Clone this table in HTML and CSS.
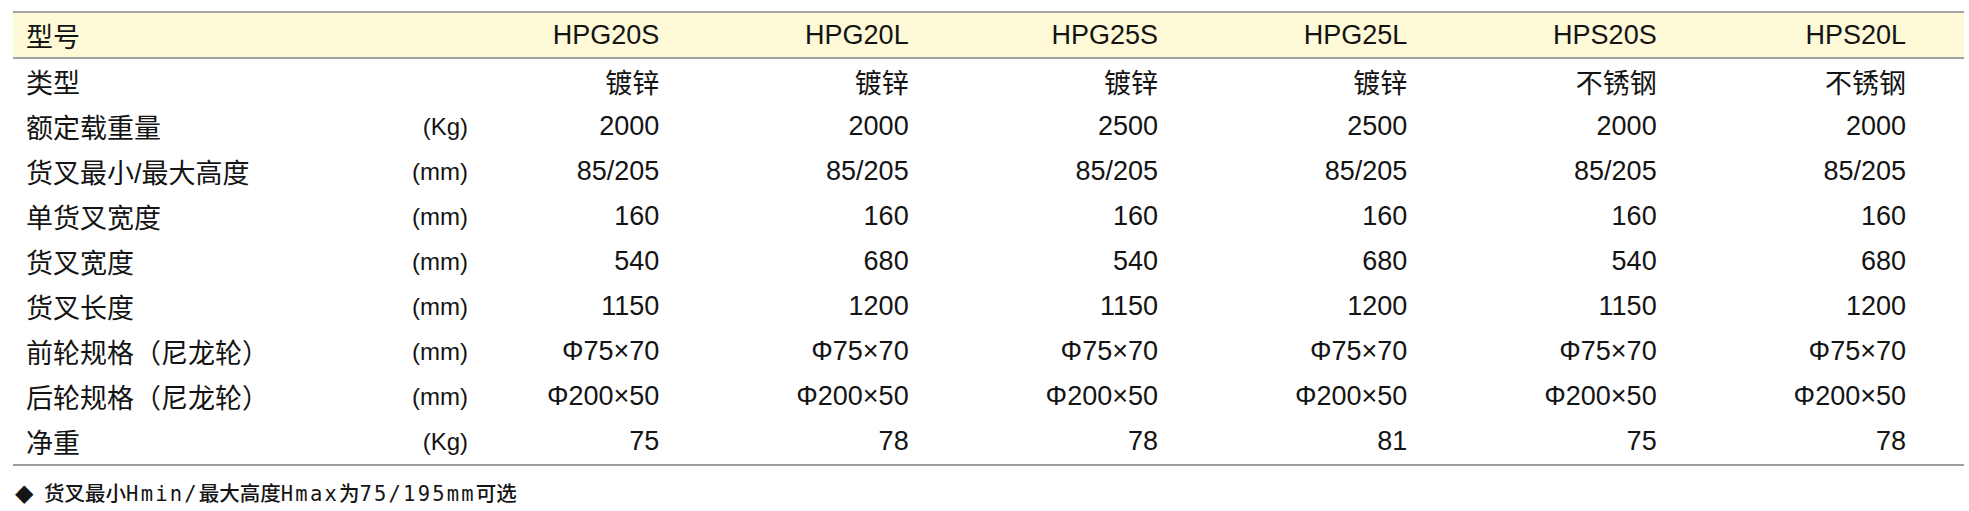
FILE: index.html
```html
<!DOCTYPE html>
<html lang="zh-CN">
<head>
<meta charset="utf-8">
<title>规格参数</title>
<link rel="stylesheet" href="styles.css">
</head>
<body>
<div class="spec">
  <div class="row head">
    <div class="label">型号</div><div class="unit"></div>
    <div class="val">HPG20S</div><div class="val">HPG20L</div><div class="val">HPG25S</div><div class="val">HPG25L</div><div class="val">HPS20S</div><div class="val">HPS20L</div>
  </div>
  <div class="row">
    <div class="label">类型</div><div class="unit"></div>
    <div class="val">镀锌</div><div class="val">镀锌</div><div class="val">镀锌</div><div class="val">镀锌</div><div class="val">不锈钢</div><div class="val">不锈钢</div>
  </div>
  <div class="row">
    <div class="label">额定载重量</div><div class="unit">(Kg)</div>
    <div class="val">2000</div><div class="val">2000</div><div class="val">2500</div><div class="val">2500</div><div class="val">2000</div><div class="val">2000</div>
  </div>
  <div class="row">
    <div class="label">货叉最小/最大高度</div><div class="unit">(mm)</div>
    <div class="val">85/205</div><div class="val">85/205</div><div class="val">85/205</div><div class="val">85/205</div><div class="val">85/205</div><div class="val">85/205</div>
  </div>
  <div class="row">
    <div class="label">单货叉宽度</div><div class="unit">(mm)</div>
    <div class="val">160</div><div class="val">160</div><div class="val">160</div><div class="val">160</div><div class="val">160</div><div class="val">160</div>
  </div>
  <div class="row">
    <div class="label">货叉宽度</div><div class="unit">(mm)</div>
    <div class="val">540</div><div class="val">680</div><div class="val">540</div><div class="val">680</div><div class="val">540</div><div class="val">680</div>
  </div>
  <div class="row">
    <div class="label">货叉长度</div><div class="unit">(mm)</div>
    <div class="val">1150</div><div class="val">1200</div><div class="val">1150</div><div class="val">1200</div><div class="val">1150</div><div class="val">1200</div>
  </div>
  <div class="row">
    <div class="label">前轮规格（尼龙轮）</div><div class="unit">(mm)</div>
    <div class="val">Φ75×70</div><div class="val">Φ75×70</div><div class="val">Φ75×70</div><div class="val">Φ75×70</div><div class="val">Φ75×70</div><div class="val">Φ75×70</div>
  </div>
  <div class="row">
    <div class="label">后轮规格（尼龙轮）</div><div class="unit">(mm)</div>
    <div class="val">Φ200×50</div><div class="val">Φ200×50</div><div class="val">Φ200×50</div><div class="val">Φ200×50</div><div class="val">Φ200×50</div><div class="val">Φ200×50</div>
  </div>
  <div class="row last">
    <div class="label">净重</div><div class="unit">(Kg)</div>
    <div class="val">75</div><div class="val">78</div><div class="val">78</div><div class="val">81</div><div class="val">75</div><div class="val">78</div>
  </div>
</div>
<p class="note"><span class="diamond">◆</span> 货叉最小<span class="lat">Hmin/</span>最大高度<span class="lat">Hmax</span>为<span class="lat">75/195mm</span>可选</p>
</body>
</html>
```
FILE: styles.css
```css
html, body {
  margin: 0;
  padding: 0;
  background: #ffffff;
}
body {
  color: #141414;
  font-family: "Liberation Sans", "Noto Sans CJK SC", sans-serif;
}
.spec {
  margin: 11px 0 0 13px;
  width: 1951px;
}
.row {
  display: grid;
  grid-template-columns: 330px 125px repeat(6, 1fr);
  align-items: center;
  height: 45px;
  font-size: 27px;
}
.row.head {
  height: 44px;
  background: #fef9d6;
  border-top: 2px solid #a3a3a3;
  border-bottom: 2px solid #a3a3a3;
}
.row.last {
  border-bottom: 2px solid #9d9d9d;
}
.label {
  padding-left: 13px;
  white-space: nowrap;
}
.unit {
  text-align: right;
  font-size: 24px;
}
.val {
  text-align: right;
  padding-right: 58px;
  white-space: nowrap;
}
.note {
  margin: 11px 0 0 15px;
  font-family: "Noto Sans CJK SC", sans-serif;
  font-weight: 500;
  font-size: 20.5px;
  line-height: 30px;
  color: #151515;
  white-space: nowrap;
}
.note .lat {
  font-family: "DejaVu Sans Mono", monospace;
  font-weight: 400;
  letter-spacing: 2.2px;
}
.diamond {
  font-family: "DejaVu Sans", sans-serif;
  font-size: 24px;
  margin-right: 6px;
}
```
